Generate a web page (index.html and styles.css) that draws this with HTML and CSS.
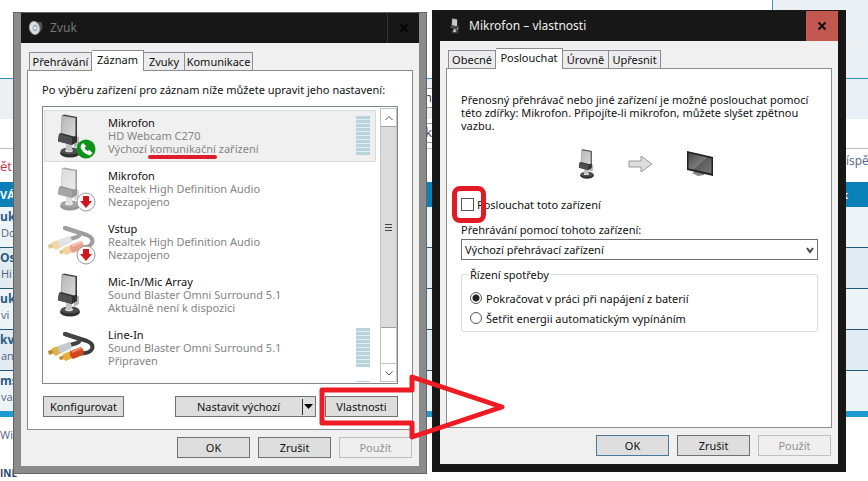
FILE: index.html
```html
<!DOCTYPE html>
<html lang="cs">
<head>
  <meta charset="UTF-8">
  <meta name="viewport" content="width=device-width, initial-scale=1.0">
  <title>Zvuk</title>
  <link rel="stylesheet" href="styles.css">
</head>
<body>
  <!-- shared drawings -->
  <svg class="defs" aria-hidden="true">
    <defs>
      <linearGradient id="metal" x1="0" x2="1" y1="0" y2="1">
        <stop offset="0" stop-color="#b4b4b4"/>
        <stop offset="1" stop-color="#dcdcdc"/>
      </linearGradient>
      <linearGradient id="screen" x1="0" x2="1" y1="0" y2="1">
        <stop offset="0" stop-color="#4a4a4a"/>
        <stop offset=".5" stop-color="#7a7a7a"/>
        <stop offset=".52" stop-color="#5c5c5c"/>
        <stop offset="1" stop-color="#777"/>
      </linearGradient>
      <symbol id="mic" viewBox="0 0 26 44">
        <ellipse cx="13" cy="39" rx="10" ry="4.500" fill="#2e2e2e"/>
        <ellipse cx="13" cy="37" rx="9.500" ry="3.500" fill="#4e4e4e"/>
        <ellipse cx="12" cy="36.500" rx="4" ry="1.800" fill="#ddd"/>
        <path d="M9 29h6v7q-3 2-6 0z" fill="#c4c4c4"/>
        <path d="M17 22l5 1v8l-5 3z" fill="#b5b5b5"/>
        <path d="M5 1.500l2-1 13 2.500v21l-3 1z" fill="#3a3a3a"/>
        <path d="M5 1.500l13.500 2.500V25L4 22z" fill="url(#metal)" stroke="#777" stroke-width=".5"/>
        <path d="M2 20l2-1 13 3.500 3-1.500v7l-5 3-14-4z" fill="#303030"/>
        <path d="M2 20l13 3.500V31L1 27.500z" fill="#505050"/>
      </symbol>
      <symbol id="cable" viewBox="0 0 48 36">
        <path d="M18 4l22 7q7 3 5 8-3 5-11 4" fill="none" stroke="#3d3d3d" stroke-width="4" stroke-linecap="round"/>
        <path d="M18 4l12 4q5 3 0 5l-7 2" fill="none" stroke="#454545" stroke-width="4" stroke-linecap="round"/>
        <path d="M1 21l5-2 1 4-5 2z" fill="#b98a2a"/>
        <path d="M5 18l7-2 4 6-7 4-3-2z" fill="#e0b34a"/>
        <path d="M11 16l11-4q4 3 2 7l-10 4q-4-3-3-7z" fill="#c9c9d0"/>
        <path d="M12 27l5-2 1 4-5 1z" fill="#b98a2a"/>
        <path d="M16 24l8-3 4 6-9 4-3-2z" fill="#e6ad3c"/>
        <path d="M23 21l11-4q4 3 2 8l-10 4q-4-3-3-8z" fill="#d2451e"/>
        <path d="M24 21l10-4 1 2-10 4z" fill="#ee8a5c"/>
      </symbol>
      <symbol id="unplugged" viewBox="0 0 20 20">
        <circle cx="10" cy="10" r="9" fill="#fbfbfb" stroke="#999"/>
        <path d="M7 4h6v5h3l-6 7-6-7h3z" fill="#d2141c"/>
      </symbol>
    </defs>
  </svg>

  <main class="desktop">
    <!-- forum page behind the windows -->
    <div class="forum" aria-hidden="true">
      <div class="forum-top"></div>
      <div class="forum-band"><span class="forum-box">h</span></div>
      <div class="forum-tools"><span class="forum-box">k</span></div>
      <div class="forum-info"><span class="forum-red">ět</span><span class="forum-side">íspě</span></div>
      <div class="forum-head"><span>VÁS</span><span>k</span></div>
      <div class="forum-row"><b>uk</b><span>Do</span></div>
      <div class="forum-row forum-row-alt"><b>Os</b><span>Hi</span></div>
      <div class="forum-row"><b>uk</b><span>vi</span></div>
      <div class="forum-row forum-row-alt"><b>kv</b><span>an</span></div>
      <div class="forum-row forum-row-last"><b>ms</b><span>va</span></div>
      <div class="forum-foot"><span>Wi</span><b>INE</b></div>
    </div>

    <div class="windows">
      <section class="window window-inactive">
        <header class="titlebar">
          <svg class="title-icon" viewBox="0 0 16 16">
            <path d="M8 2l5 0q3 4 0 9l-4 3z" fill="#4d5358"/>
            <ellipse cx="6.500" cy="8" rx="5" ry="6.500" fill="#dfe5e8" stroke="#9aa3a8" transform="rotate(-15 6.500 8)"/>
            <ellipse cx="7" cy="8" rx="2.500" ry="3.500" fill="#aab4ba"/>
            <circle cx="7" cy="8" r="1.200" fill="#f5f5f5"/>
          </svg>
          <h1>Zvuk</h1>
          <button class="close" type="button" aria-label="Zavřít"><svg viewBox="0 0 10 10"><path d="M1.500 1.500l7 7M8.500 1.500l-7 7"/></svg></button>
        </header>
        <div class="window-body">
          <nav class="tabs">
            <button type="button" class="tab tab-playback">Přehrávání</button>
            <button type="button" class="tab tab-record active">Záznam</button>
            <button type="button" class="tab tab-sounds">Zvuky</button>
            <button type="button" class="tab tab-comm">Komunikace</button>
          </nav>
          <div class="panel panel-devices">
            <p class="intro">Po výběru zařízení pro záznam níže můžete upravit jeho nastavení:</p>
            <div class="device-box">
              <ul class="devices">
                <li class="device selected">
                  <div class="device-icon">
                    <svg class="mic"><use href="#mic"/></svg>
                    <svg class="badge" viewBox="0 0 20 20">
                      <circle cx="10" cy="10" r="9.500" fill="#0c9418"/>
                      <path d="M5 6l2-2 3 3-1.500 2q1 2 3 3L13.500 11l3 3-2 2q-3 1-7-3T5 6z" fill="#fff"/>
                    </svg>
                  </div>
                  <div class="device-text"><b>Mikrofon</b><span>HD Webcam C270</span><span>Výchozí <mark>komunikační</mark> zařízení</span></div>
                  <div class="meter"></div>
                </li>
                <li class="device">
                  <div class="device-icon">
                    <svg class="mic faded"><use href="#mic"/></svg>
                    <svg class="badge"><use href="#unplugged"/></svg>
                  </div>
                  <div class="device-text"><b>Mikrofon</b><span>Realtek High Definition Audio</span><span>Nezapojeno</span></div>
                </li>
                <li class="device">
                  <div class="device-icon">
                    <svg class="cable faded"><use href="#cable"/></svg>
                    <svg class="badge"><use href="#unplugged"/></svg>
                  </div>
                  <div class="device-text"><b>Vstup</b><span>Realtek High Definition Audio</span><span>Nezapojeno</span></div>
                </li>
                <li class="device">
                  <div class="device-icon"><svg class="mic"><use href="#mic"/></svg></div>
                  <div class="device-text"><b>Mic-In/Mic Array</b><span>Sound Blaster Omni Surround 5.1</span><span>Aktuálně není k dispozici</span></div>
                </li>
                <li class="device">
                  <div class="device-icon"><svg class="cable"><use href="#cable"/></svg></div>
                  <div class="device-text"><b>Line-In</b><span>Sound Blaster Omni Surround 5.1</span><span>Připraven</span></div>
                  <div class="meter"></div>
                </li>
                <li class="device"><div class="device-text"></div><div class="meter"></div></li>
              </ul>
              <div class="scrollbar">
                <button type="button" aria-label="Nahoru"><svg viewBox="0 0 10 10"><path d="M1.500 7L5 3.500 8.500 7"/></svg></button>
                <div class="thumb"><i></i><i></i><i></i></div>
                <div class="track"></div>
                <button type="button" aria-label="Dolů"><svg viewBox="0 0 10 10"><path d="M1.500 3.500L5 7l3.500-3.500"/></svg></button>
              </div>
            </div>
            <div class="device-actions">
              <button type="button" class="btn btn-configure">Konfigurovat</button>
              <button type="button" class="btn btn-default">
                <span>Nastavit výchozí</span>
                <svg viewBox="0 0 12 16"><path d="M1.500 0v16" stroke="#333"/><path d="M3 5h9l-4.500 5z"/></svg>
              </button>
              <div class="pointed">
                <button type="button" class="btn">Vlastnosti</button>
                <svg class="arrow" viewBox="0 0 188 68"><path d="M4 17H94V4L184 34 94 64V50H4z"/></svg>
              </div>
            </div>
          </div>
          <footer class="dialog-actions">
            <button type="button" class="btn">OK</button>
            <button type="button" class="btn">Zrušit</button>
            <button type="button" class="btn" disabled>Použít</button>
          </footer>
        </div>
      </section>

      <section class="window window-active">
        <header class="titlebar">
          <svg class="title-icon"><use href="#mic"/></svg>
          <h1>Mikrofon – vlastnosti</h1>
          <button class="close" type="button" aria-label="Zavřít"><svg viewBox="0 0 10 10"><path d="M1.500 1.500l7 7M8.500 1.500l-7 7"/></svg></button>
        </header>
        <div class="window-body">
          <nav class="tabs">
            <button type="button" class="tab tab-general">Obecné</button>
            <button type="button" class="tab tab-listen active">Poslouchat</button>
            <button type="button" class="tab tab-levels">Úrovně</button>
            <button type="button" class="tab tab-advanced">Upřesnit</button>
          </nav>
          <form class="panel panel-listen">
            <p class="help">Přenosný přehrávač nebo jiné zařízení je možné poslouchat pomocí této zdířky: Mikrofon. Připojíte-li mikrofon, můžete slyšet zpětnou vazbu.</p>
            <div class="route">
              <svg class="route-mic"><use href="#mic"/></svg>
              <svg class="route-arrow" viewBox="0 0 26 20"><path d="M1 7h12V2l11 8-11 8v-5H1z" fill="#ddd" stroke="#999"/></svg>
              <svg class="route-tv" viewBox="0 0 28 28">
                <path d="M6 23l4-2 8 2 0 2-6 1z" fill="#888"/>
                <path d="M1 1l26 6v19L1 20z" fill="#222"/>
                <path d="M2.500 3l23 5.500v15L2.500 18.500z" fill="url(#screen)"/>
              </svg>
            </div>
            <div class="check-row">
              <span class="ringed"><input type="checkbox" id="listen"></span>
              <label for="listen">Poslouchat toto zařízení</label>
            </div>
            <label class="select-label" for="output">Přehrávání pomocí tohoto zařízení:</label>
            <div class="select-wrap">
              <select id="output"><option>Výchozí přehrávací zařízení</option></select>
              <svg viewBox="0 0 8 8"><path d="M1 2l3 4 3-4"/></svg>
            </div>
            <fieldset>
              <legend>Řízení spotřeby</legend>
              <div class="radio-row"><input type="radio" name="power" id="keep" checked><label for="keep">Pokračovat v práci při napájení z baterií</label></div>
              <div class="radio-row"><input type="radio" name="power" id="save"><label for="save">Šetřit energii automatickým vypínáním</label></div>
            </fieldset>
          </form>
          <footer class="dialog-actions">
            <button type="button" class="btn primary">OK</button>
            <button type="button" class="btn">Zrušit</button>
            <button type="button" class="btn" disabled>Použít</button>
          </footer>
        </div>
      </section>
    </div>
  </main>
</body>
</html>
```
FILE: styles.css
```css
*, *::after {
  box-sizing: border-box;
}
body {
  margin: 0;
  background: #fff;
  color: #111;
  font-family: "Noto Sans", "Open Sans", sans-serif;
  font-size: 11px;
  line-height: 13px;
}
button, select, input {
  font: inherit;
  color: inherit;
  margin: 0;
}
h1, p, ul {
  margin: 0;
  padding: 0;
}
.defs {
  position: absolute;
  width: 0;
  height: 0;
}
.desktop {
  position: relative;
  min-height: 100vh;
  overflow: hidden;
}

/* forum page */
.forum {
  color: #536482;
  font-family: "Open Sans", sans-serif;
  font-size: 13px;
  line-height: 16px;
}
.forum-top {
  height: 78px;
  margin-left: auto;
  width: 96px;
  background: #eaf0f3;
  border-left: 1px solid #3a9dc4;
}
.forum-band {
  height: 41px;
  padding-top: 9px;
  background: #eaf0f3;
  border-top: 1px solid #2b93bd;
}
.forum-tools {
  height: 30px;
  padding-top: 4px;
  border-bottom: 1px solid #bbb;
}
.forum-box {
  display: block;
  width: 50%;
  height: 20px;
  padding-right: 2px;
  border: 1px solid #8c9aa5;
  border-width: 1px 0;
  background: #fff;
  color: #5c3a5c;
  text-align: right;
  clip-path: inset(0 0 0 90%);
}
.forum-info {
  display: flex;
  justify-content: space-between;
  height: 33px;
  padding-top: 4px;
}
.forum-side {
  width: 22px;
  font-size: 12px;
}
.forum-red {
  padding-top: 5px;
  color: #c8304c;
}
.forum-head {
  display: flex;
  justify-content: space-between;
  height: 25px;
  padding: 5px 20px 0 0;
  background: #0a80b8;
  color: #fff;
  font-size: 11px;
  font-weight: bold;
}
.forum-row {
  display: flex;
  flex-direction: column;
  height: 41px;
  padding-top: 2px;
  background: #ecf4f8;
  border-bottom: 1px solid #24587a;
}
.forum-row b {
  color: #245c86;
  font-size: 12px;
}
.forum-row span {
  padding-left: 1px;
  font-size: 11px;
}
.forum-row-alt {
  background: #e1ebf2;
}
.forum-row-last {
  height: 46px;
  border-bottom: 6px solid #1d9bd1;
}
.forum-foot {
  display: flex;
  flex-direction: column;
  gap: 22px;
  padding-top: 10px;
  font-size: 11px;
}
.forum-foot b {
  color: #24466a;
  font-size: 10px;
}

/* windows */
.windows {
  position: absolute;
  inset: 10px 22px auto 13px;
  display: flex;
  align-items: flex-start;
  gap: 5px;
}
.window {
  flex: 1;
  padding: 0 7px 7px;
  border: 1px solid #1a1a1a;
  background: #171717;
}
.window-inactive {
  margin-top: 2px;
  border-color: #636363;
  background: #8b8b8b;
}
.titlebar {
  display: flex;
  align-items: center;
  height: 30px;
  background: #171717;
  color: #eee;
}
.titlebar h1 {
  flex: 1;
  font-size: 12px;
  font-weight: normal;
  line-height: 16px;
}
.title-icon {
  width: 16px;
  height: 16px;
  margin: 0 6px 0 7px;
}
.window-inactive h1 {
  color: #777;
}
.close {
  display: flex;
  align-items: center;
  justify-content: center;
  width: 32px;
  height: 30px;
  padding: 0;
  border: 0;
  background: #c1574f;
}
.close svg {
  width: 10px;
  height: 10px;
  fill: none;
  stroke: #111;
  stroke-width: 2;
}
.window-inactive .close {
  border-left: 1px solid #333;
  background: #171717;
}
.window-inactive .close svg {
  stroke: #050505;
}
.window-body {
  padding: 7px 6px;
  background: #f0f0f0;
}

/* tabs */
.tabs {
  display: flex;
  align-items: flex-end;
  height: 20px;
  padding-left: 2px;
}
.tab {
  height: 18px;
  padding: 0;
  border: 1px solid #8a8c91;
  border-width: 1px 1px 0 0;
  background: #ececec;
  line-height: 17px;
  white-space: nowrap;
}
.tab:first-child {
  border-left-width: 1px;
}
.tab.active {
  z-index: 1;
  height: 21px;
  margin-bottom: -1px;
  padding-bottom: 3px;
  background: #fff;
}
.tab-playback {
  width: 63px;
}
.tab-record {
  width: 52px;
}
.tab-sounds {
  width: 41px;
}
.tab-comm {
  width: 68px;
}
.tab-general {
  width: 48px;
}
.tab-listen {
  width: 67px;
}
.tab-levels {
  width: 46px;
}
.tab-advanced {
  width: 52px;
}
.panel {
  min-height: 360px;
  padding: 12px 14px 10px;
  border: 1px solid #8a8c91;
  background: #fff;
}

/* device list */
.intro {
  line-height: 14px;
  white-space: nowrap;
}
.device-box {
  display: flex;
  height: 278px;
  margin-top: 9px;
  padding: 1px 0 1px 1px;
  border: 1px solid #82878f;
}
.devices {
  flex: 1;
  overflow: hidden;
  padding: 2px 4px 0 0;
  list-style: none;
}
.device {
  display: flex;
  height: 53px;
  padding: 5px 5px 0 9px;
  border: 1px solid transparent;
}
.device.selected {
  height: 52px;
  margin-bottom: 1px;
  background: #f0f0f0;
  border-color: #dadada;
}
.device-icon {
  position: relative;
  width: 54px;
}
.mic {
  width: 26px;
  height: 44px;
  margin: -2px 0 0 3px;
}
.cable {
  width: 48px;
  height: 36px;
  margin: 2px 0 0 -7px;
}
.faded {
  opacity: 0.5;
}
.badge {
  position: absolute;
  left: 22px;
  top: 23px;
  width: 20px;
  height: 20px;
}
.device-text {
  display: flex;
  flex: 1;
  flex-direction: column;
  color: #858585;
  white-space: nowrap;
}
.device-text b {
  color: #111;
  font-weight: normal;
}
.device-text mark {
  position: relative;
  background: none;
  color: inherit;
}
.device-text mark::after {
  content: "";
  position: absolute;
  left: -2px;
  right: -1px;
  bottom: -3px;
  height: 4px;
  border-radius: 2px;
  background: #dd1c2c;
}
.meter {
  width: 14px;
  height: 39px;
  background: repeating-linear-gradient(#b9d3dc 0 3px, #e3edf1 3px 4px);
}
.scrollbar {
  display: flex;
  flex-direction: column;
  width: 17px;
  border: 1px solid #c4c4c4;
  background: #fff;
}
.scrollbar button {
  display: flex;
  align-items: center;
  justify-content: center;
  height: 17px;
  padding: 0;
  border: 0;
  background: #fff;
}
.scrollbar svg {
  width: 10px;
  height: 10px;
  fill: none;
  stroke: #555;
}
.thumb {
  display: flex;
  flex: 1;
  flex-direction: column;
  align-items: center;
  justify-content: center;
  gap: 2px;
  border: 1px solid #a0a0a0;
  border-width: 1px 0;
  background: #dcdcdc;
}
.thumb i {
  width: 7px;
  height: 1px;
  background: #444;
}
.track {
  height: 36px;
  border-bottom: 1px solid #c4c4c4;
}

/* buttons */
.btn {
  width: 73px;
  height: 21px;
  padding: 0;
  border: 1px solid #707070;
  background: #dedede;
  white-space: nowrap;
}
.btn:disabled {
  border-color: #bfbfbf;
  background: #efefef;
  color: #929292;
}
.btn.primary {
  border-color: #47799c;
}
.device-actions {
  display: flex;
  margin: 12px 0 0 1px;
}
.btn-configure {
  width: 81px;
}
.btn-default {
  display: flex;
  align-items: center;
  width: 141px;
  margin: 0 9px 0 auto;
}
.btn-default span {
  flex: 1;
}
.btn-default svg {
  width: 12px;
  height: 16px;
  margin-right: 2px;
}
.pointed {
  position: relative;
}
.arrow {
  position: absolute;
  left: -7px;
  top: -23px;
  z-index: 5;
  width: 188px;
  height: 68px;
  fill: none;
  stroke: #ed1c24;
  stroke-width: 5;
  stroke-linejoin: round;
  pointer-events: none;
}
.dialog-actions {
  display: flex;
  justify-content: flex-end;
  gap: 8px;
  padding: 7px 1px 1px 0;
}

/* listen tab */
.panel-listen {
  padding: 24px 13px 10px 14px;
}
.help {
  margin-right: -6px;
}
.route {
  display: flex;
  align-items: center;
  justify-content: center;
  gap: 32px;
  height: 30px;
  margin: 17px 0 19px 13px;
}
.route-mic {
  width: 18px;
  height: 30px;
}
.route-arrow {
  width: 26px;
  height: 20px;
}
.route-tv {
  width: 28px;
  height: 28px;
}
.check-row, .radio-row {
  display: flex;
  align-items: center;
}
.ringed {
  position: relative;
  display: flex;
  margin-right: 3px;
}
.ringed::after {
  content: "";
  position: absolute;
  left: -9px;
  top: -12px;
  z-index: 2;
  width: 34px;
  height: 37px;
  border: 5px solid #e01b26;
  border-radius: 8px;
  pointer-events: none;
}
.check-row input {
  appearance: none;
  width: 13px;
  height: 13px;
  border: 1px solid #555;
  background: #fff;
}
.select-label {
  display: block;
  margin: 12px 0 3px;
}
.select-wrap {
  position: relative;
}
.select-wrap select {
  appearance: none;
  display: block;
  width: 100%;
  height: 21px;
  padding: 0 20px 0 3px;
  border: 1px solid #6e6e6e;
  border-radius: 0;
  background: #fff;
}
.select-wrap svg {
  position: absolute;
  right: 4px;
  top: 7px;
  width: 8px;
  height: 8px;
  fill: none;
  stroke: #444;
  stroke-width: 2;
  pointer-events: none;
}
fieldset {
  margin: 8px 0 0;
  padding: 7px 8px 3px;
  border: 1px solid #dcdcdc;
  border-radius: 3px;
}
legend {
  margin-left: -2px;
  padding: 0 2px;
}
.radio-row {
  height: 20px;
}
.radio-row input {
  appearance: none;
  width: 12px;
  height: 12px;
  margin-right: 4px;
  border: 1px solid #555;
  border-radius: 50%;
  background: #fff;
}
.radio-row input:checked {
  background: radial-gradient(#222 0 3px, #fff 4px);
}
```
